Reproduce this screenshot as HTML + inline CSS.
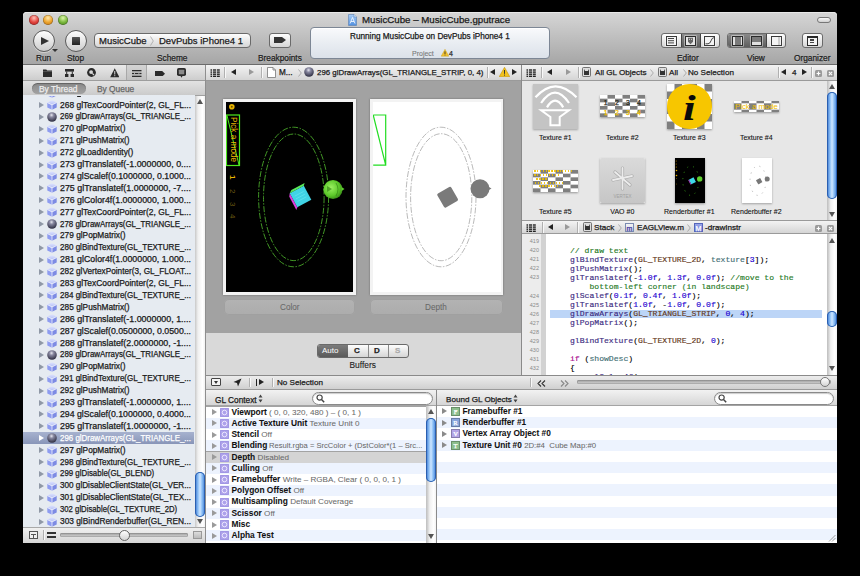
<!DOCTYPE html><html><head><meta charset="utf-8"><style>
*{box-sizing:border-box}
html,body{margin:0;padding:0}
body{width:860px;height:576px;background:#000;position:relative;overflow:hidden;font-family:"Liberation Sans",sans-serif;color:#222}
.a{position:absolute}
.t{position:absolute;white-space:nowrap;line-height:1;-webkit-text-stroke:0.25px currentColor}
.light{position:absolute;width:10px;height:10px;border-radius:50%;box-shadow:inset 0 0 0 0.5px rgba(0,0,0,.35)}
.t b{-webkit-text-stroke:0.05px currentColor}
.lbl{position:absolute;font-size:8.3px;color:#1e1e1e;-webkit-text-stroke:0.25px currentColor;white-space:nowrap;line-height:1;text-shadow:0 1px 0 rgba(255,255,255,.35)}
.btn{position:absolute;background:linear-gradient(#fdfdfd,#d6d6d6);border:1px solid #6a6a6a;border-radius:3px}
.jb{position:absolute;background:linear-gradient(#f3f3f3,#d5d5d5);border-bottom:1px solid #9a9a9a}
.sep{position:absolute;width:1px;background:#b5b5b5}
.row{position:absolute;height:12px}
.nt{position:absolute;font-size:8.2px;color:#111;white-space:nowrap;line-height:1}
.tri{position:absolute;width:0;height:0;border-top:3px solid transparent;border-bottom:3px solid transparent;border-left:5px solid #8e8e8e}
.code{position:absolute;font-family:"Liberation Mono",monospace;font-size:8.1px;-webkit-text-stroke:0.15px currentColor;white-space:pre;line-height:1;color:#000}
.ln{position:absolute;font-size:5.5px;color:#8a8a8a;text-align:right;width:20px;line-height:1}
</style></head><body>
<div class="a" style="left:23px;top:12px;width:814px;height:531px;background:#a3a3a3;border-radius:4px 4px 0 0;overflow:hidden"></div>
<div class="a" style="left:23px;top:12px;width:814px;height:53px;background:linear-gradient(#d6d6d6,#a6a6a6);border-radius:4px 4px 0 0;border-bottom:1px solid #6b6b6b;box-shadow:inset 0 1px 0 #e8e8e8"></div>
<div class="light" style="left:29px;top:15px;background:radial-gradient(circle at 50% 30%,#ffc0b8 0,#e2463f 50%,#a01418 100%)"></div>
<div class="light" style="left:43px;top:15px;background:radial-gradient(circle at 50% 30%,#ffe9ae 0,#eda52e 50%,#b1650d 100%)"></div>
<div class="light" style="left:58px;top:15px;background:radial-gradient(circle at 50% 30%,#dcf5a8 0,#7cb93f 50%,#3b7613 100%)"></div>
<div class="a" style="left:817px;top:17px;width:14px;height:6px;border-radius:3px;border:1px solid #777;background:linear-gradient(#fafafa,#cfcfcf)"></div>
<svg class="a" style="left:348px;top:14px" width="9" height="12" viewBox="0 0 9 12"><defs><linearGradient id="dg" x1="0" y1="0" x2="0" y2="1"><stop offset="0" stop-color="#a9cdf5"/><stop offset="1" stop-color="#4f8fe0"/></linearGradient></defs><path d="M0.5 0.5h5.5l2.5 2.5v8.5h-8z" fill="url(#dg)" stroke="#5a7fb0" stroke-width="0.6"/><path d="M6 0.5v2.5h2.5" fill="#dbe9fa" stroke="#5a7fb0" stroke-width="0.5"/><path d="M2 9.5L4.5 3.5 7 9.5M3 7.5h3" fill="none" stroke="#fff" stroke-width="0.8"/></svg>
<div class="t" style="left:362px;top:15px;font-size:9.7px;color:#1a1a1a">MusicCube &ndash; MusicCube.gputrace</div>
<div class="a" style="left:33px;top:30px;width:22px;height:22px;border-radius:50%;border:1px solid #5a5a5a;background:linear-gradient(#fefefe,#cdcdcd);box-shadow:0 1px 0 rgba(255,255,255,.4)"></div>
<div class="a" style="left:41px;top:36.5px;width:0;height:0;border-top:4px solid transparent;border-bottom:4px solid transparent;border-left:8px solid #333"></div>
<div class="a" style="left:52px;top:49px;width:0;height:0;border-left:3px solid transparent;border-right:3px solid transparent;border-top:3px solid #333"></div>
<div class="a" style="left:65px;top:30px;width:22px;height:22px;border-radius:50%;border:1px solid #5a5a5a;background:linear-gradient(#fefefe,#cdcdcd)"></div>
<div class="a" style="left:72px;top:36.5px;width:8px;height:8px;background:linear-gradient(#555,#222);border-radius:0.5px"></div>
<div class="lbl" style="left:36px;top:54px">Run</div>
<div class="lbl" style="left:67px;top:54px">Stop</div>
<div class="btn" style="left:94px;top:33px;width:157px;height:15px;border-radius:4px"></div>
<div class="t" style="left:99px;top:36px;font-size:9.5px;color:#1a1a1a">MusicCube</div>
<svg class="a" style="left:149.5px;top:36px" width="4" height="10" viewBox="0 0 4 10"><path d="M0.5 0.5L3.3 5 0.5 9.5" fill="none" stroke="#a5a5a5" stroke-width="0.8"/></svg>
<div class="t" style="left:159px;top:36px;font-size:9.5px;color:#1a1a1a">DevPubs iPhone4 1</div>
<div class="lbl" style="left:157px;top:54px">Scheme</div>
<div class="btn" style="left:269px;top:33px;width:22px;height:15px"></div>
<div class="a" style="left:274px;top:37px;width:8px;height:6px;background:#333"></div>
<div class="a" style="left:282px;top:37px;width:0;height:0;border-top:3px solid transparent;border-bottom:3px solid transparent;border-left:4px solid #333"></div>
<div class="lbl" style="left:258px;top:54px">Breakpoints</div>
<div class="a" style="left:310px;top:27px;width:240px;height:32px;border-radius:4px;border:1px solid #7d8795;background:linear-gradient(#f9fafc,#e9edf2 50%,#dce2ea);box-shadow:inset 0 1px 0 #fff"></div>
<div class="t" style="left:350px;top:32.5px;font-size:8.2px;color:#1a1a1a">Running MusicCube on DevPubs iPhone4 1</div>
<div class="t" style="left:412px;top:50px;font-size:7px;color:#7a7a7a;-webkit-text-stroke:0.1px currentColor">Project</div>
<svg class="a" style="left:441px;top:49px" width="8" height="7.5" viewBox="0 0 8 7.5"><path d="M4 0.3L7.8 7.2H0.2z" fill="#f2c230" stroke="#c49a10" stroke-width="0.4"/><rect x="3.6" y="2.4" width="0.8" height="2.6" fill="#222"/><rect x="3.6" y="5.6" width="0.8" height="0.8" fill="#222"/></svg>
<div class="t" style="left:449px;top:50px;font-size:7px;color:#333">4</div>
<div class="btn" style="left:661px;top:33px;width:59px;height:15px;border-radius:3px;overflow:hidden"><div class="a" style="left:19px;top:0;width:20px;height:13px;background:linear-gradient(#8a8a8a,#5e5e5e);border-left:1px solid #444;border-right:1px solid #444"></div></div>
<div class="btn" style="left:727px;top:33px;width:59px;height:15px;border-radius:3px;overflow:hidden"><div class="a" style="left:0;top:0;width:39px;height:13px;background:linear-gradient(#8a8a8a,#5e5e5e);border-right:1px solid #444"></div></div>
<div class="btn" style="left:802px;top:33px;width:21px;height:15px"></div>
<div class="lbl" style="left:677px;top:54px">Editor</div>
<div class="lbl" style="left:747px;top:54px">View</div>
<div class="lbl" style="left:794px;top:54px">Organizer</div>
<div class="a" style="left:23px;top:65px;width:182px;height:16px;background:linear-gradient(#e9e9e9,#cdcdcd);border-bottom:1px solid #9d9d9d"></div>
<div class="a" style="left:126px;top:65px;width:21px;height:15px;background:linear-gradient(#d3d3d3,#c0c0c0);border-left:1px solid #a8a8a8;border-right:1px solid #a8a8a8"></div>
<div class="a" style="left:23px;top:81px;width:182px;height:15px;background:linear-gradient(#e2e2e2,#cbcbcb);border-bottom:1px solid #a0a0a0"></div>
<div class="a" style="left:32px;top:83px;width:54px;height:11px;border-radius:6px;background:linear-gradient(#8a8a8a,#a2a2a2);box-shadow:inset 0 1px 1px rgba(0,0,0,.3)"></div>
<div class="t" style="left:39px;top:85px;font-size:8.4px;color:#eee">By Thread</div>
<div class="t" style="left:97px;top:85px;font-size:8.4px;color:#666">By Queue</div>
<div class="a" style="left:23px;top:95px;width:172px;height:432px;background:#e6ebf1"></div>
<div class="a" style="left:195px;top:96px;width:10px;height:431px;background:linear-gradient(90deg,#c8c8c8,#f0f0f0 30%,#fff 75%,#f2f2f2)"></div>
<div class="a" style="left:23px;top:527px;width:182px;height:16px;background:linear-gradient(#f0f0f0,#d6d6d6);border-top:1px solid #a9a9a9"></div>
<div class="a" style="left:205px;top:65px;width:1px;height:478px;background:#8e8e8e"></div>
<div class="jb" style="left:206px;top:65px;width:315px;height:16px"></div>
<div class="a" style="left:206px;top:81px;width:315px;height:252px;background:#a2a2a2"></div>
<div class="a" style="left:206px;top:333px;width:315px;height:43px;background:#d9d9d9"></div>
<div class="a" style="left:223px;top:99px;width:133px;height:196px;background:#f3f3f3;box-shadow:0 0 2px rgba(0,0,0,.35)"></div>
<div class="a" style="left:226px;top:102px;width:127px;height:190px;background:#000"></div>
<div class="a" style="left:370px;top:99px;width:133px;height:196px;background:#f3f3f3;box-shadow:0 0 2px rgba(0,0,0,.35)"></div>
<div class="a" style="left:373px;top:102px;width:128px;height:190px;background:#fff"></div>
<div class="a" style="left:224px;top:299px;width:131px;height:16px;border-radius:5px;background:linear-gradient(#b3b3b3,#acacac);box-shadow:inset 0 0 0 1px #a0a0a0"></div>
<div class="a" style="left:370px;top:299px;width:133px;height:16px;border-radius:5px;background:linear-gradient(#b3b3b3,#acacac);box-shadow:inset 0 0 0 1px #a0a0a0"></div>
<div class="t" style="left:280px;top:303.5px;font-size:8.2px;color:#686868;-webkit-text-stroke:0.05px currentColor">Color</div>
<div class="t" style="left:425px;top:303.5px;font-size:8.2px;color:#686868;-webkit-text-stroke:0.05px currentColor">Depth</div>
<div class="btn" style="left:317px;top:344px;width:92px;height:14px;border-radius:3px;overflow:hidden"><div class="a" style="left:0;top:0;width:30px;height:12px;background:linear-gradient(#7c7c7c,#5a5a5a)"></div><div class="a" style="left:50px;top:0;width:1px;height:12px;background:#8a8a8a"></div><div class="a" style="left:70px;top:0;width:1px;height:12px;background:#8a8a8a"></div></div>
<div class="t" style="left:322px;top:347px;font-size:8px;color:#fff;-webkit-text-stroke:0">Auto</div>
<div class="t" style="left:354px;top:347px;font-size:8px;font-weight:bold;color:#222">C</div>
<div class="t" style="left:374px;top:347px;font-size:8px;font-weight:bold;color:#222">D</div>
<div class="t" style="left:395px;top:347px;font-size:8px;font-weight:bold;color:#aaa">S</div>
<div class="t" style="left:349.5px;top:361px;font-size:8.4px;color:#222;-webkit-text-stroke:0.1px #222">Buffers</div>
<div class="a" style="left:521px;top:65px;width:1px;height:310px;background:#8a8a8a"></div>
<div class="jb" style="left:522px;top:65px;width:315px;height:16px"></div>
<div class="a" style="left:522px;top:81px;width:315px;height:139px;background:#e7e7e7"></div>
<div class="jb" style="left:522px;top:220px;width:315px;height:14px;border-top:1px solid #9a9a9a"></div>
<div class="a" style="left:522px;top:234px;width:315px;height:141px;background:#fff"></div>
<div class="a" style="left:522px;top:234px;width:19px;height:141px;background:#ececec"></div>
<div class="a" style="left:541px;top:234px;width:5px;height:141px;background:#d2d2d2"></div>
<div class="a" style="left:206px;top:375px;width:631px;height:15px;background:linear-gradient(#ececec,#d0d0d0);border-top:1px solid #8a8a8a;border-bottom:1px solid #9a9a9a"></div>
<div class="a" style="left:206px;top:390px;width:230px;height:16px;background:linear-gradient(#f2f2f2,#d6d6d6);border-bottom:1px solid #a4a4a4"></div>
<div class="a" style="left:437px;top:390px;width:400px;height:16px;background:linear-gradient(#f2f2f2,#d6d6d6);border-bottom:1px solid #a4a4a4"></div>
<div class="a" style="left:436px;top:390px;width:1px;height:153px;background:#8a8a8a"></div>
<div class="a" style="left:206px;top:406.60px;width:220px;height:11.2px;background:#ffffff"></div>
<div class="a" style="left:206px;top:417.83px;width:220px;height:11.2px;background:#edf3fe"></div>
<div class="a" style="left:206px;top:429.06px;width:220px;height:11.2px;background:#ffffff"></div>
<div class="a" style="left:206px;top:440.29px;width:220px;height:11.2px;background:#edf3fe"></div>
<div class="a" style="left:206px;top:451.52px;width:220px;height:11.2px;background:#d4d4d4"></div>
<div class="a" style="left:206px;top:462.75px;width:220px;height:11.2px;background:#edf3fe"></div>
<div class="a" style="left:206px;top:473.98px;width:220px;height:11.2px;background:#ffffff"></div>
<div class="a" style="left:206px;top:485.21px;width:220px;height:11.2px;background:#edf3fe"></div>
<div class="a" style="left:206px;top:496.44px;width:220px;height:11.2px;background:#ffffff"></div>
<div class="a" style="left:206px;top:507.67px;width:220px;height:11.2px;background:#edf3fe"></div>
<div class="a" style="left:206px;top:518.90px;width:220px;height:11.2px;background:#ffffff"></div>
<div class="a" style="left:206px;top:530.13px;width:220px;height:11.2px;background:#edf3fe"></div>
<div class="a" style="left:206px;top:541.36px;width:220px;height:11.2px;background:#ffffff"></div>
<div class="a" style="left:437px;top:406.00px;width:400px;height:11.2px;background:#ffffff"></div>
<div class="a" style="left:437px;top:417.20px;width:400px;height:11.2px;background:#edf3fe"></div>
<div class="a" style="left:437px;top:428.40px;width:400px;height:11.2px;background:#ffffff"></div>
<div class="a" style="left:437px;top:439.60px;width:400px;height:11.2px;background:#edf3fe"></div>
<div class="a" style="left:437px;top:450.80px;width:400px;height:11.2px;background:#ffffff"></div>
<div class="a" style="left:437px;top:462.00px;width:400px;height:11.2px;background:#edf3fe"></div>
<div class="a" style="left:437px;top:473.20px;width:400px;height:11.2px;background:#ffffff"></div>
<div class="a" style="left:437px;top:484.40px;width:400px;height:11.2px;background:#edf3fe"></div>
<div class="a" style="left:437px;top:495.60px;width:400px;height:11.2px;background:#ffffff"></div>
<div class="a" style="left:437px;top:506.80px;width:400px;height:11.2px;background:#edf3fe"></div>
<div class="a" style="left:437px;top:518.00px;width:400px;height:11.2px;background:#ffffff"></div>
<div class="a" style="left:437px;top:529.20px;width:400px;height:11.2px;background:#edf3fe"></div>
<div class="a" style="left:437px;top:540.40px;width:400px;height:11.2px;background:#ffffff"></div>
<svg width="0" height="0" style="position:absolute"><defs>
<linearGradient id="gTop" x1="0" y1="0" x2="0" y2="1"><stop offset="0" stop-color="#dfe4ff"/><stop offset="1" stop-color="#b4bff5"/></linearGradient>
<radialGradient id="gBall" cx="0.45" cy="0.3" r="0.75"><stop offset="0" stop-color="#e8e8f0"/><stop offset="0.3" stop-color="#8888a0"/><stop offset="1" stop-color="#232336"/></radialGradient>
<symbol id="cube" viewBox="0 0 10 10"><polygon points="5,0.3 9.7,2.6 5,4.9 0.3,2.6" fill="url(#gTop)"/><polygon points="0.3,2.6 5,4.9 5,9.8 0.3,7.5" fill="#8e9cf0"/><polygon points="5,4.9 9.7,2.6 9.7,7.5 5,9.8" fill="#7d8be4"/><polyline points="0.3,2.6 5,4.9 9.7,2.6" fill="none" stroke="#fff" stroke-width="0.7"/><line x1="5" y1="4.9" x2="5" y2="9.8" stroke="#fff" stroke-width="0.7"/></symbol>
<symbol id="ball" viewBox="0 0 10 10"><circle cx="5" cy="5" r="4.8" fill="url(#gBall)"/></symbol>
</defs></svg>
<div class="a" style="left:23px;top:96px;width:172px;height:431px;overflow:hidden">
<svg class="a" style="left:24px;top:-7.9px" width="10" height="10"><use href="#cube"/></svg>
<div class="a" style="left:54px;top:0;width:4px;height:1.2px;background:#222;border-radius:1px"></div>
<div class="a" style="left:16px;top:6.0px;width:0;height:0;border-top:3px solid transparent;border-bottom:3px solid transparent;border-left:5px solid #8f98a6"></div>
<svg class="a" style="left:24px;top:4.0px" width="10" height="10"><use href="#cube"/></svg>
<div class="t" style="left:37px;top:4.5px;font-size:8.3px;color:#1a1a1a;transform-origin:0 0;transform:scaleX(1.018)">268 glTexCoordPointer(2, GL_FL...</div>
<div class="a" style="left:16px;top:17.9px;width:0;height:0;border-top:3px solid transparent;border-bottom:3px solid transparent;border-left:5px solid #8f98a6"></div>
<svg class="a" style="left:24px;top:15.9px" width="10" height="10"><use href="#ball"/></svg>
<div class="t" style="left:37px;top:16.4px;font-size:8.3px;color:#1a1a1a;transform-origin:0 0;transform:scaleX(0.953)">269 glDrawArrays(GL_TRIANGLE_...</div>
<div class="a" style="left:16px;top:29.8px;width:0;height:0;border-top:3px solid transparent;border-bottom:3px solid transparent;border-left:5px solid #8f98a6"></div>
<svg class="a" style="left:24px;top:27.8px" width="10" height="10"><use href="#cube"/></svg>
<div class="t" style="left:37px;top:28.3px;font-size:8.3px;color:#1a1a1a">270 glPopMatrix()</div>
<div class="a" style="left:16px;top:41.7px;width:0;height:0;border-top:3px solid transparent;border-bottom:3px solid transparent;border-left:5px solid #8f98a6"></div>
<svg class="a" style="left:24px;top:39.7px" width="10" height="10"><use href="#cube"/></svg>
<div class="t" style="left:37px;top:40.2px;font-size:8.3px;color:#1a1a1a">271 glPushMatrix()</div>
<div class="a" style="left:16px;top:53.6px;width:0;height:0;border-top:3px solid transparent;border-bottom:3px solid transparent;border-left:5px solid #8f98a6"></div>
<svg class="a" style="left:24px;top:51.6px" width="10" height="10"><use href="#cube"/></svg>
<div class="t" style="left:37px;top:52.1px;font-size:8.3px;color:#1a1a1a">272 glLoadIdentity()</div>
<div class="a" style="left:16px;top:65.5px;width:0;height:0;border-top:3px solid transparent;border-bottom:3px solid transparent;border-left:5px solid #8f98a6"></div>
<svg class="a" style="left:24px;top:63.5px" width="10" height="10"><use href="#cube"/></svg>
<div class="t" style="left:37px;top:64.0px;font-size:8.3px;color:#1a1a1a;transform-origin:0 0;transform:scaleX(1.070)">273 glTranslatef(-1.0000000, 0....</div>
<div class="a" style="left:16px;top:77.4px;width:0;height:0;border-top:3px solid transparent;border-bottom:3px solid transparent;border-left:5px solid #8f98a6"></div>
<svg class="a" style="left:24px;top:75.4px" width="10" height="10"><use href="#cube"/></svg>
<div class="t" style="left:37px;top:75.9px;font-size:8.3px;color:#1a1a1a;transform-origin:0 0;transform:scaleX(1.052)">274 glScalef(0.1000000, 0.1000...</div>
<div class="a" style="left:16px;top:89.3px;width:0;height:0;border-top:3px solid transparent;border-bottom:3px solid transparent;border-left:5px solid #8f98a6"></div>
<svg class="a" style="left:24px;top:87.3px" width="10" height="10"><use href="#cube"/></svg>
<div class="t" style="left:37px;top:87.8px;font-size:8.3px;color:#1a1a1a;transform-origin:0 0;transform:scaleX(1.070)">275 glTranslatef(1.0000000, -7....</div>
<div class="a" style="left:16px;top:101.2px;width:0;height:0;border-top:3px solid transparent;border-bottom:3px solid transparent;border-left:5px solid #8f98a6"></div>
<svg class="a" style="left:24px;top:99.2px" width="10" height="10"><use href="#cube"/></svg>
<div class="t" style="left:37px;top:99.7px;font-size:8.3px;color:#1a1a1a;transform-origin:0 0;transform:scaleX(1.060)">276 glColor4f(1.0000000, 1.000...</div>
<div class="a" style="left:16px;top:113.1px;width:0;height:0;border-top:3px solid transparent;border-bottom:3px solid transparent;border-left:5px solid #8f98a6"></div>
<svg class="a" style="left:24px;top:111.1px" width="10" height="10"><use href="#cube"/></svg>
<div class="t" style="left:37px;top:111.6px;font-size:8.3px;color:#1a1a1a;transform-origin:0 0;transform:scaleX(1.018)">277 glTexCoordPointer(2, GL_FL...</div>
<div class="a" style="left:16px;top:125.0px;width:0;height:0;border-top:3px solid transparent;border-bottom:3px solid transparent;border-left:5px solid #8f98a6"></div>
<svg class="a" style="left:24px;top:123.0px" width="10" height="10"><use href="#ball"/></svg>
<div class="t" style="left:37px;top:123.5px;font-size:8.3px;color:#1a1a1a;transform-origin:0 0;transform:scaleX(0.953)">278 glDrawArrays(GL_TRIANGLE_...</div>
<div class="a" style="left:16px;top:136.9px;width:0;height:0;border-top:3px solid transparent;border-bottom:3px solid transparent;border-left:5px solid #8f98a6"></div>
<svg class="a" style="left:24px;top:134.9px" width="10" height="10"><use href="#cube"/></svg>
<div class="t" style="left:37px;top:135.4px;font-size:8.3px;color:#1a1a1a">279 glPopMatrix()</div>
<div class="a" style="left:16px;top:148.8px;width:0;height:0;border-top:3px solid transparent;border-bottom:3px solid transparent;border-left:5px solid #8f98a6"></div>
<svg class="a" style="left:24px;top:146.8px" width="10" height="10"><use href="#cube"/></svg>
<div class="t" style="left:37px;top:147.3px;font-size:8.3px;color:#1a1a1a;transform-origin:0 0;transform:scaleX(0.969)">280 glBindTexture(GL_TEXTURE_...</div>
<div class="a" style="left:16px;top:160.7px;width:0;height:0;border-top:3px solid transparent;border-bottom:3px solid transparent;border-left:5px solid #8f98a6"></div>
<svg class="a" style="left:24px;top:158.7px" width="10" height="10"><use href="#cube"/></svg>
<div class="t" style="left:37px;top:159.2px;font-size:8.3px;color:#1a1a1a;transform-origin:0 0;transform:scaleX(1.060)">281 glColor4f(1.0000000, 1.000...</div>
<div class="a" style="left:16px;top:172.6px;width:0;height:0;border-top:3px solid transparent;border-bottom:3px solid transparent;border-left:5px solid #8f98a6"></div>
<svg class="a" style="left:24px;top:170.6px" width="10" height="10"><use href="#cube"/></svg>
<div class="t" style="left:37px;top:171.1px;font-size:8.3px;color:#1a1a1a;transform-origin:0 0;transform:scaleX(0.991)">282 glVertexPointer(3, GL_FLOAT...</div>
<div class="a" style="left:16px;top:184.5px;width:0;height:0;border-top:3px solid transparent;border-bottom:3px solid transparent;border-left:5px solid #8f98a6"></div>
<svg class="a" style="left:24px;top:182.5px" width="10" height="10"><use href="#cube"/></svg>
<div class="t" style="left:37px;top:183.0px;font-size:8.3px;color:#1a1a1a;transform-origin:0 0;transform:scaleX(1.018)">283 glTexCoordPointer(2, GL_FL...</div>
<div class="a" style="left:16px;top:196.4px;width:0;height:0;border-top:3px solid transparent;border-bottom:3px solid transparent;border-left:5px solid #8f98a6"></div>
<svg class="a" style="left:24px;top:194.4px" width="10" height="10"><use href="#cube"/></svg>
<div class="t" style="left:37px;top:194.9px;font-size:8.3px;color:#1a1a1a;transform-origin:0 0;transform:scaleX(0.969)">284 glBindTexture(GL_TEXTURE_...</div>
<div class="a" style="left:16px;top:208.3px;width:0;height:0;border-top:3px solid transparent;border-bottom:3px solid transparent;border-left:5px solid #8f98a6"></div>
<svg class="a" style="left:24px;top:206.3px" width="10" height="10"><use href="#cube"/></svg>
<div class="t" style="left:37px;top:206.8px;font-size:8.3px;color:#1a1a1a">285 glPushMatrix()</div>
<div class="a" style="left:16px;top:220.2px;width:0;height:0;border-top:3px solid transparent;border-bottom:3px solid transparent;border-left:5px solid #8f98a6"></div>
<svg class="a" style="left:24px;top:218.2px" width="10" height="10"><use href="#cube"/></svg>
<div class="t" style="left:37px;top:218.7px;font-size:8.3px;color:#1a1a1a;transform-origin:0 0;transform:scaleX(1.070)">286 glTranslatef(-1.0000000, 1....</div>
<div class="a" style="left:16px;top:232.1px;width:0;height:0;border-top:3px solid transparent;border-bottom:3px solid transparent;border-left:5px solid #8f98a6"></div>
<svg class="a" style="left:24px;top:230.1px" width="10" height="10"><use href="#cube"/></svg>
<div class="t" style="left:37px;top:230.6px;font-size:8.3px;color:#1a1a1a;transform-origin:0 0;transform:scaleX(1.052)">287 glScalef(0.0500000, 0.0500...</div>
<div class="a" style="left:16px;top:244.0px;width:0;height:0;border-top:3px solid transparent;border-bottom:3px solid transparent;border-left:5px solid #8f98a6"></div>
<svg class="a" style="left:24px;top:242.0px" width="10" height="10"><use href="#cube"/></svg>
<div class="t" style="left:37px;top:242.5px;font-size:8.3px;color:#1a1a1a;transform-origin:0 0;transform:scaleX(1.070)">288 glTranslatef(2.0000000, -1....</div>
<div class="a" style="left:16px;top:255.9px;width:0;height:0;border-top:3px solid transparent;border-bottom:3px solid transparent;border-left:5px solid #8f98a6"></div>
<svg class="a" style="left:24px;top:253.9px" width="10" height="10"><use href="#ball"/></svg>
<div class="t" style="left:37px;top:254.4px;font-size:8.3px;color:#1a1a1a;transform-origin:0 0;transform:scaleX(0.953)">289 glDrawArrays(GL_TRIANGLE_...</div>
<div class="a" style="left:16px;top:267.8px;width:0;height:0;border-top:3px solid transparent;border-bottom:3px solid transparent;border-left:5px solid #8f98a6"></div>
<svg class="a" style="left:24px;top:265.8px" width="10" height="10"><use href="#cube"/></svg>
<div class="t" style="left:37px;top:266.3px;font-size:8.3px;color:#1a1a1a">290 glPopMatrix()</div>
<div class="a" style="left:16px;top:279.7px;width:0;height:0;border-top:3px solid transparent;border-bottom:3px solid transparent;border-left:5px solid #8f98a6"></div>
<svg class="a" style="left:24px;top:277.7px" width="10" height="10"><use href="#cube"/></svg>
<div class="t" style="left:37px;top:278.2px;font-size:8.3px;color:#1a1a1a;transform-origin:0 0;transform:scaleX(0.969)">291 glBindTexture(GL_TEXTURE_...</div>
<div class="a" style="left:16px;top:291.6px;width:0;height:0;border-top:3px solid transparent;border-bottom:3px solid transparent;border-left:5px solid #8f98a6"></div>
<svg class="a" style="left:24px;top:289.6px" width="10" height="10"><use href="#cube"/></svg>
<div class="t" style="left:37px;top:290.1px;font-size:8.3px;color:#1a1a1a">292 glPushMatrix()</div>
<div class="a" style="left:16px;top:303.5px;width:0;height:0;border-top:3px solid transparent;border-bottom:3px solid transparent;border-left:5px solid #8f98a6"></div>
<svg class="a" style="left:24px;top:301.5px" width="10" height="10"><use href="#cube"/></svg>
<div class="t" style="left:37px;top:302.0px;font-size:8.3px;color:#1a1a1a;transform-origin:0 0;transform:scaleX(1.070)">293 glTranslatef(-1.0000000, 1....</div>
<div class="a" style="left:16px;top:315.4px;width:0;height:0;border-top:3px solid transparent;border-bottom:3px solid transparent;border-left:5px solid #8f98a6"></div>
<svg class="a" style="left:24px;top:313.4px" width="10" height="10"><use href="#cube"/></svg>
<div class="t" style="left:37px;top:313.9px;font-size:8.3px;color:#1a1a1a;transform-origin:0 0;transform:scaleX(1.052)">294 glScalef(0.1000000, 0.4000...</div>
<div class="a" style="left:16px;top:327.3px;width:0;height:0;border-top:3px solid transparent;border-bottom:3px solid transparent;border-left:5px solid #8f98a6"></div>
<svg class="a" style="left:24px;top:325.3px" width="10" height="10"><use href="#cube"/></svg>
<div class="t" style="left:37px;top:325.8px;font-size:8.3px;color:#1a1a1a;transform-origin:0 0;transform:scaleX(1.070)">295 glTranslatef(1.0000000, -1....</div>
<div class="a" style="left:0;top:336.2px;width:171px;height:12px;background:linear-gradient(#a7b2cf,#8895b8)"></div>
<div class="a" style="left:16px;top:339.2px;width:0;height:0;border-top:3px solid transparent;border-bottom:3px solid transparent;border-left:5px solid #fff"></div>
<svg class="a" style="left:24px;top:337.2px" width="10" height="10"><use href="#ball"/></svg>
<div class="t" style="left:37px;top:337.7px;font-size:8.3px;color:#fff;transform-origin:0 0;transform:scaleX(0.953)">296 glDrawArrays(GL_TRIANGLE_...</div>
<div class="a" style="left:16px;top:351.1px;width:0;height:0;border-top:3px solid transparent;border-bottom:3px solid transparent;border-left:5px solid #8f98a6"></div>
<svg class="a" style="left:24px;top:349.1px" width="10" height="10"><use href="#cube"/></svg>
<div class="t" style="left:37px;top:349.6px;font-size:8.3px;color:#1a1a1a">297 glPopMatrix()</div>
<div class="a" style="left:16px;top:363.0px;width:0;height:0;border-top:3px solid transparent;border-bottom:3px solid transparent;border-left:5px solid #8f98a6"></div>
<svg class="a" style="left:24px;top:361.0px" width="10" height="10"><use href="#cube"/></svg>
<div class="t" style="left:37px;top:361.5px;font-size:8.3px;color:#1a1a1a;transform-origin:0 0;transform:scaleX(0.969)">298 glBindTexture(GL_TEXTURE_...</div>
<div class="a" style="left:16px;top:374.9px;width:0;height:0;border-top:3px solid transparent;border-bottom:3px solid transparent;border-left:5px solid #8f98a6"></div>
<svg class="a" style="left:24px;top:372.9px" width="10" height="10"><use href="#cube"/></svg>
<div class="t" style="left:37px;top:373.4px;font-size:8.3px;color:#1a1a1a;transform-origin:0 0;transform:scaleX(0.950)">299 glDisable(GL_BLEND)</div>
<div class="a" style="left:16px;top:386.8px;width:0;height:0;border-top:3px solid transparent;border-bottom:3px solid transparent;border-left:5px solid #8f98a6"></div>
<svg class="a" style="left:24px;top:384.8px" width="10" height="10"><use href="#cube"/></svg>
<div class="t" style="left:37px;top:385.3px;font-size:8.3px;color:#1a1a1a;transform-origin:0 0;transform:scaleX(0.983)">300 glDisableClientState(GL_VER...</div>
<div class="a" style="left:16px;top:398.7px;width:0;height:0;border-top:3px solid transparent;border-bottom:3px solid transparent;border-left:5px solid #8f98a6"></div>
<svg class="a" style="left:24px;top:396.7px" width="10" height="10"><use href="#cube"/></svg>
<div class="t" style="left:37px;top:397.2px;font-size:8.3px;color:#1a1a1a;transform-origin:0 0;transform:scaleX(0.990)">301 glDisableClientState(GL_TEX...</div>
<div class="a" style="left:16px;top:410.6px;width:0;height:0;border-top:3px solid transparent;border-bottom:3px solid transparent;border-left:5px solid #8f98a6"></div>
<svg class="a" style="left:24px;top:408.6px" width="10" height="10"><use href="#cube"/></svg>
<div class="t" style="left:37px;top:409.1px;font-size:8.3px;color:#1a1a1a;transform-origin:0 0;transform:scaleX(0.934)">302 glDisable(GL_TEXTURE_2D)</div>
<div class="a" style="left:16px;top:422.5px;width:0;height:0;border-top:3px solid transparent;border-bottom:3px solid transparent;border-left:5px solid #8f98a6"></div>
<svg class="a" style="left:24px;top:420.5px" width="10" height="10"><use href="#cube"/></svg>
<div class="t" style="left:37px;top:421.0px;font-size:8.3px;color:#1a1a1a;transform-origin:0 0;transform:scaleX(1.005)">303 glBindRenderbuffer(GL_REN...</div>
</div>
<div class="a" style="left:197px;top:99px;width:0;height:0;border-left:3px solid transparent;border-right:3px solid transparent;border-bottom:5px solid #555"></div>
<div class="a" style="left:195px;top:472px;width:10px;height:45px;border-radius:5px;background:linear-gradient(90deg,#3670cc,#8cc0f6 30%,#cfe6ff 50%,#8cc0f6 70%,#3d7ad4);box-shadow:inset 0 0 0 1px #2a5fb0"></div>
<div class="a" style="left:197px;top:519px;width:0;height:0;border-left:3px solid transparent;border-right:3px solid transparent;border-top:5px solid #555"></div>
<svg class="a" style="left:42.5px;top:68.5px" width="9" height="8" viewBox="0 0 9 8"><path d="M0 0.5h3.3l0.8 1h4.9v6.5h-9z" fill="#2b2b2b"/><rect x="0" y="2.2" width="9" height="0.5" fill="#777"/></svg>
<svg class="a" style="left:65px;top:68.5px" width="9" height="8" viewBox="0 0 9 8"><rect x="0" y="0" width="9" height="2.6" fill="#2b2b2b"/><rect x="0" y="5" width="3.4" height="3" fill="#2b2b2b"/><rect x="5.6" y="5" width="3.4" height="3" fill="#2b2b2b"/><rect x="1.2" y="2.5" width="1" height="2.6" fill="#2b2b2b"/><rect x="6.8" y="2.5" width="1" height="2.6" fill="#2b2b2b"/></svg>
<svg class="a" style="left:87.3px;top:68px" width="9" height="9" viewBox="0 0 9 9"><circle cx="4.5" cy="4.5" r="4.4" fill="#2b2b2b"/><circle cx="4.1" cy="4.1" r="1.9" fill="#d8d8d8"/><line x1="5.3" y1="5.3" x2="7" y2="7" stroke="#d8d8d8" stroke-width="1.2"/></svg>
<svg class="a" style="left:109.7px;top:68px" width="9.5" height="9.5" viewBox="0 0 9.5 9.5"><path d="M4.75 0.3L9.3 9.2H0.2z" fill="#2b2b2b"/><rect x="4.25" y="3" width="1" height="3.5" fill="#d8d8d8"/><rect x="4.25" y="7.2" width="1" height="1" fill="#d8d8d8"/></svg>
<svg class="a" style="left:132px;top:69.5px" width="9.5" height="7" viewBox="0 0 9.5 7"><rect x="0" y="0" width="9.5" height="1.3" fill="#2b2b2b"/><rect x="0" y="2.85" width="9.5" height="1.3" fill="#2b2b2b"/><rect x="0" y="5.7" width="9.5" height="1.3" fill="#2b2b2b"/><rect x="2" y="2.85" width="0.8" height="1.3" fill="#ccc"/><rect x="6.5" y="2.85" width="0.8" height="1.3" fill="#ccc"/></svg>
<svg class="a" style="left:154.5px;top:70.5px" width="10" height="5.5" viewBox="0 0 10 5.5"><path d="M0 0h7.2l2.8 2.75-2.8 2.75h-7.2z" fill="#2b2b2b"/></svg>
<svg class="a" style="left:176.9px;top:68px" width="9" height="10" viewBox="0 0 9 10"><rect x="0" y="0" width="9" height="8" rx="1.8" fill="#2b2b2b"/><path d="M3.5 7.9l1 1.8 1-1.8z" fill="#2b2b2b"/><rect x="1.8" y="1.8" width="5.4" height="4.4" rx="0.5" fill="#8a8a8a"/></svg>
<svg class="a" style="left:210px;top:69px" width="10" height="8" viewBox="0 0 10 8"><rect x="0.5" y="0.3" width="1.6" height="1.4" fill="#222"/><rect x="3" y="0.3" width="3" height="1.4" fill="#222"/><rect x="6.8" y="0.3" width="3" height="1.4" fill="#222"/><rect x="0.5" y="2.4" width="1.6" height="1.4" fill="#222"/><rect x="3" y="2.4" width="3" height="1.4" fill="#222"/><rect x="6.8" y="2.4" width="3" height="1.4" fill="#222"/><rect x="0.5" y="4.5" width="1.6" height="1.4" fill="#222"/><rect x="3" y="4.5" width="3" height="1.4" fill="#222"/><rect x="6.8" y="4.5" width="3" height="1.4" fill="#222"/><rect x="0.5" y="6.6" width="1.6" height="1.4" fill="#222"/><rect x="3" y="6.6" width="3" height="1.4" fill="#222"/><rect x="6.8" y="6.6" width="3" height="1.4" fill="#222"/></svg>
<div class="a" style="left:224px;top:67px;width:1px;height:11px;background:#b0b0b0;box-shadow:1px 0 0 #f8f8f8"></div>
<div class="a" style="left:231px;top:69px;width:0;height:0;border-top:3.5px solid transparent;border-bottom:3.5px solid transparent;border-right:5px solid #222"></div>
<div class="a" style="left:249px;top:69px;width:0;height:0;border-top:3.5px solid transparent;border-bottom:3.5px solid transparent;border-left:5px solid #999"></div>
<div class="a" style="left:261px;top:67px;width:1px;height:11px;background:#b0b0b0;box-shadow:1px 0 0 #f8f8f8"></div>
<svg class="a" style="left:267px;top:67px" width="9" height="11" viewBox="0 0 9 11"><path d="M0.5 0.5h5.5l2.5 2.5v7.5h-8z" fill="#fff" stroke="#777" stroke-width="0.8"/><path d="M6 0.5v2.5h2.5" fill="none" stroke="#777" stroke-width="0.8"/></svg>
<div class="t" style="left:279px;top:69px;font-size:8.2px;color:#1a1a1a">M...</div>
<svg class="a" style="left:298px;top:69px" width="4" height="8" viewBox="0 0 4 8"><path d="M0.5 0.5L3.3 4 0.5 7.5" fill="none" stroke="#9d9d9d" stroke-width="0.8"/></svg>
<svg class="a" style="left:304px;top:67px" width="10" height="10"><use href="#ball"/></svg>
<div class="t" style="left:317px;top:69px;font-size:7.9px;color:#1a1a1a">296 glDrawArrays(GL_TRIANGLE_STRIP, 0, 4)</div>
<div class="a" style="left:487px;top:67px;width:1px;height:11px;background:#b0b0b0;box-shadow:1px 0 0 #f8f8f8"></div>
<div class="a" style="left:490px;top:69px;width:0;height:0;border-top:3.5px solid transparent;border-bottom:3.5px solid transparent;border-right:5px solid #222"></div>
<svg class="a" style="left:499px;top:67px" width="11" height="10" viewBox="0 0 11 10"><path d="M5.5 0.3L10.8 9.7H0.2z" fill="#f2c21c" stroke="#b88a00" stroke-width="0.5"/><rect x="5" y="3" width="1" height="3.8" fill="#333"/><rect x="5" y="7.6" width="1" height="1" fill="#333"/></svg>
<div class="a" style="left:512px;top:69px;width:0;height:0;border-top:3.5px solid transparent;border-bottom:3.5px solid transparent;border-left:5px solid #222"></div>
<svg class="a" style="left:526px;top:69px" width="10" height="8" viewBox="0 0 10 8"><rect x="0.5" y="0.3" width="1.6" height="1.4" fill="#222"/><rect x="3" y="0.3" width="3" height="1.4" fill="#222"/><rect x="6.8" y="0.3" width="3" height="1.4" fill="#222"/><rect x="0.5" y="2.4" width="1.6" height="1.4" fill="#222"/><rect x="3" y="2.4" width="3" height="1.4" fill="#222"/><rect x="6.8" y="2.4" width="3" height="1.4" fill="#222"/><rect x="0.5" y="4.5" width="1.6" height="1.4" fill="#222"/><rect x="3" y="4.5" width="3" height="1.4" fill="#222"/><rect x="6.8" y="4.5" width="3" height="1.4" fill="#222"/><rect x="0.5" y="6.6" width="1.6" height="1.4" fill="#222"/><rect x="3" y="6.6" width="3" height="1.4" fill="#222"/><rect x="6.8" y="6.6" width="3" height="1.4" fill="#222"/></svg>
<div class="a" style="left:541px;top:67px;width:1px;height:11px;background:#b0b0b0;box-shadow:1px 0 0 #f8f8f8"></div>
<div class="a" style="left:547px;top:69px;width:0;height:0;border-top:3.5px solid transparent;border-bottom:3.5px solid transparent;border-right:5px solid #222"></div>
<div class="a" style="left:566px;top:69px;width:0;height:0;border-top:3.5px solid transparent;border-bottom:3.5px solid transparent;border-left:5px solid #999"></div>
<div class="a" style="left:578px;top:67px;width:1px;height:11px;background:#b0b0b0;box-shadow:1px 0 0 #f8f8f8"></div>
<svg class="a" style="left:582px;top:67px" width="9" height="10" viewBox="0 0 9 10"><rect x="0.5" y="0.5" width="8" height="9" rx="1" fill="#ddd" stroke="#555" stroke-width="0.8"/><path d="M2 2v6h5v-6l-1 2h-3z" fill="#333"/></svg>
<div class="t" style="left:595px;top:69px;font-size:8.1px;color:#1a1a1a">All GL Objects</div>
<svg class="a" style="left:650px;top:69px" width="4" height="8" viewBox="0 0 4 8"><path d="M0.5 0.5L3.3 4 0.5 7.5" fill="none" stroke="#9d9d9d" stroke-width="0.8"/></svg>
<svg class="a" style="left:658px;top:67px" width="9" height="10" viewBox="0 0 9 10"><rect x="0.5" y="0.5" width="8" height="9" rx="1" fill="#ddd" stroke="#555" stroke-width="0.8"/><path d="M2 2v6h5v-6l-1 2h-3z" fill="#333"/></svg>
<div class="t" style="left:669px;top:69px;font-size:8.1px;color:#1a1a1a">All</div>
<svg class="a" style="left:683px;top:69px" width="4" height="8" viewBox="0 0 4 8"><path d="M0.5 0.5L3.3 4 0.5 7.5" fill="none" stroke="#9d9d9d" stroke-width="0.8"/></svg>
<div class="t" style="left:688px;top:69px;font-size:8.1px;color:#1a1a1a">No Selection</div>
<div class="a" style="left:778px;top:67px;width:1px;height:11px;background:#b0b0b0;box-shadow:1px 0 0 #f8f8f8"></div>
<div class="a" style="left:781px;top:69px;width:0;height:0;border-top:3.5px solid transparent;border-bottom:3.5px solid transparent;border-right:5px solid #222"></div>
<div class="t" style="left:792px;top:69px;font-size:8.1px;color:#1a1a1a">4</div>
<div class="a" style="left:802px;top:69px;width:0;height:0;border-top:3.5px solid transparent;border-bottom:3.5px solid transparent;border-left:5px solid #222"></div>
<div class="a" style="left:811px;top:67px;width:1px;height:11px;background:#b0b0b0;box-shadow:1px 0 0 #f8f8f8"></div>
<svg class="a" style="left:815.2px;top:69.7px" width="7" height="7" viewBox="0 0 7 7"><rect width="7" height="7" rx="1.5" fill="#9a9a9a"/><path d="M3.5 1.6v3.8M1.6 3.5h3.8" stroke="#fff" stroke-width="1.2"/></svg>
<svg class="a" style="left:827px;top:69.7px" width="7" height="7" viewBox="0 0 7 7"><rect width="7" height="7" rx="1.5" fill="#9a9a9a"/><path d="M1.9 1.9l3.2 3.2M5.1 1.9l-3.2 3.2" stroke="#fff" stroke-width="1.1"/></svg>
<svg class="a" style="left:526px;top:224px" width="10" height="8" viewBox="0 0 10 8"><rect x="0.5" y="0.3" width="1.6" height="1.4" fill="#222"/><rect x="3" y="0.3" width="3" height="1.4" fill="#222"/><rect x="6.8" y="0.3" width="3" height="1.4" fill="#222"/><rect x="0.5" y="2.4" width="1.6" height="1.4" fill="#222"/><rect x="3" y="2.4" width="3" height="1.4" fill="#222"/><rect x="6.8" y="2.4" width="3" height="1.4" fill="#222"/><rect x="0.5" y="4.5" width="1.6" height="1.4" fill="#222"/><rect x="3" y="4.5" width="3" height="1.4" fill="#222"/><rect x="6.8" y="4.5" width="3" height="1.4" fill="#222"/><rect x="0.5" y="6.6" width="1.6" height="1.4" fill="#222"/><rect x="3" y="6.6" width="3" height="1.4" fill="#222"/><rect x="6.8" y="6.6" width="3" height="1.4" fill="#222"/></svg>
<div class="a" style="left:542px;top:222px;width:1px;height:11px;background:#b0b0b0;box-shadow:1px 0 0 #f8f8f8"></div>
<div class="a" style="left:548px;top:224px;width:0;height:0;border-top:3.5px solid transparent;border-bottom:3.5px solid transparent;border-right:5px solid #222"></div>
<div class="a" style="left:565px;top:224px;width:0;height:0;border-top:3.5px solid transparent;border-bottom:3.5px solid transparent;border-left:5px solid #999"></div>
<div class="a" style="left:577px;top:222px;width:1px;height:11px;background:#b0b0b0;box-shadow:1px 0 0 #f8f8f8"></div>
<svg class="a" style="left:583px;top:222px" width="9" height="10" viewBox="0 0 9 10"><rect x="0.5" y="0.5" width="8" height="9" rx="1" fill="#ddd" stroke="#555" stroke-width="0.8"/><path d="M2 2v6h5v-6l-1 2h-3z" fill="#333"/></svg>
<div class="t" style="left:594px;top:224px;font-size:8.1px;color:#1a1a1a">Stack</div>
<svg class="a" style="left:618px;top:224px" width="4" height="8" viewBox="0 0 4 8"><path d="M0.5 0.5L3.3 4 0.5 7.5" fill="none" stroke="#9d9d9d" stroke-width="0.8"/></svg>
<div class="a" style="left:625px;top:223px;width:9px;height:9px;background:linear-gradient(#f4f4f4,#cfd7e8);border:1px solid #7a8bb0"><div class="t" style="left:0.5px;top:0.5px;font-size:7px;color:#4a3aa0">m</div></div>
<div class="t" style="left:637px;top:224px;font-size:8.1px;color:#1a1a1a">EAGLView.m</div>
<svg class="a" style="left:687px;top:224px" width="4" height="8" viewBox="0 0 4 8"><path d="M0.5 0.5L3.3 4 0.5 7.5" fill="none" stroke="#9d9d9d" stroke-width="0.8"/></svg>
<div class="a" style="left:694px;top:223px;width:9px;height:9px;background:linear-gradient(#9aa6e8,#6f7fd8);border:1px solid #5566bb"><div class="t" style="left:0.5px;top:0.5px;font-size:7px;color:#fff">M</div></div>
<div class="t" style="left:705px;top:224px;font-size:8.1px;color:#1a1a1a">-drawInstr</div>
<svg class="a" style="left:815.2px;top:224.5px" width="7" height="7" viewBox="0 0 7 7"><rect width="7" height="7" rx="1.5" fill="#9a9a9a"/><path d="M3.5 1.6v3.8M1.6 3.5h3.8" stroke="#fff" stroke-width="1.2"/></svg>
<svg class="a" style="left:827px;top:224.5px" width="7" height="7" viewBox="0 0 7 7"><rect width="7" height="7" rx="1.5" fill="#9a9a9a"/><path d="M1.9 1.9l3.2 3.2M5.1 1.9l-3.2 3.2" stroke="#fff" stroke-width="1.1"/></svg>
<div class="a" style="left:211px;top:378px;width:10px;height:8px;border:1px solid #444;border-radius:1px;background:#f4f4f4"><div class="a" style="left:2px;top:2px;width:0;height:0;border-left:2.5px solid transparent;border-right:2.5px solid transparent;border-top:3px solid #333"></div></div>
<svg class="a" style="left:233px;top:378px" width="9" height="9" viewBox="0 0 9 9"><path d="M8.5 0.5L0.5 4l3.5 1 1 3.5z" fill="#222"/></svg>
<div class="a" style="left:249px;top:378px;width:1px;height:9px;background:#b0b0b0;box-shadow:1px 0 0 #f8f8f8"></div>
<div class="a" style="left:256px;top:379px;width:1px;height:7px;background:#222"></div>
<div class="a" style="left:259px;top:379px;width:0;height:0;border-top:3.5px solid transparent;border-bottom:3.5px solid transparent;border-left:5px solid #222"></div>
<div class="a" style="left:272px;top:378px;width:1px;height:9px;background:#b0b0b0;box-shadow:1px 0 0 #f8f8f8"></div>
<div class="t" style="left:277px;top:379px;font-size:8.1px;color:#1a1a1a">No Selection</div>
<div class="a" style="left:530px;top:378px;width:1px;height:9px;background:#b0b0b0;box-shadow:1px 0 0 #f8f8f8"></div>
<svg class="a" style="left:537px;top:379.5px" width="9" height="7" viewBox="0 0 9 7"><path d="M4 0.5L1 3.5 4 6.5M8 0.5L5 3.5 8 6.5" fill="none" stroke="#333" stroke-width="1.1"/></svg>
<svg class="a" style="left:560px;top:379.5px" width="9" height="7" viewBox="0 0 9 7"><path d="M1 0.5L4 3.5 1 6.5M5 0.5L8 3.5 5 6.5" fill="none" stroke="#888" stroke-width="1.1"/></svg>
<div class="a" style="left:577px;top:380px;width:254px;height:4px;border-radius:2px;background:linear-gradient(#9a9a9a,#d8d8d8);box-shadow:inset 0 0 0 0.5px #888"></div>
<div class="a" style="left:820px;top:377px;width:10px;height:10px;border-radius:50%;background:linear-gradient(#fff,#d4d4d4);border:1px solid #777"></div>
<svg class="a" style="left:226px;top:102px" width="127" height="188" viewBox="226 102 127 188">
<ellipse cx="293.6" cy="197" rx="35" ry="69.8" fill="none" stroke="#4aa82a" stroke-width="0.9" stroke-dasharray="6 1.5 1.5 1.5"/>
<ellipse cx="293.8" cy="197.3" rx="30.3" ry="63.3" fill="none" stroke="#4aa82a" stroke-width="0.9" stroke-dasharray="6 1.5 1.5 1.5"/>
<g transform="translate(300.5 196.5) rotate(-28)">
<rect x="-8" y="-8" width="16" height="16" fill="#40d4e6"/><path d="M-5 -3h10M-5 0h10M-5 3h10" stroke="#6ae6f2" stroke-width="0.6"/>
<path d="M-8 -8 L-10 -5 L-10 10 L-8 8z" fill="#e040e0"/>
<path d="M-8 -8 L-5 -10 L10 -10 L8 -8z" fill="#5ae85a"/>

</g>
<defs><radialGradient id="sph" cx="0.4" cy="0.4" r="0.7"><stop offset="0" stop-color="#9af060"/><stop offset="0.6" stop-color="#5cc82a"/><stop offset="1" stop-color="#2f7a12"/></radialGradient></defs>
<circle cx="333" cy="189.5" r="9.5" fill="url(#sph)"/>
<path d="M327 186 l5 3 -5 3z" fill="#3a8a1a" opacity=".7"/>
<path d="M336 183 q4 6 0 13" fill="none" stroke="#2f7a12" stroke-width="1" opacity=".6"/>
<path d="M341.5 187 l3 2 -3 2z" fill="#5fd02f"/>
<circle cx="231.8" cy="106.8" r="2.8" fill="#e8b400"/>
<circle cx="231.8" cy="106.8" r="1" fill="#6a5000"/>
<rect x="226.5" y="115" width="13" height="50.5" fill="none" stroke="#4ee81e" stroke-width="1.2"/>
<line x1="227" y1="115.5" x2="239" y2="165" stroke="#4ee81e" stroke-width="1"/>
</svg>
<div class="t" style="left:237px;top:116.5px;font-size:8.2px;color:#e8b400;-webkit-text-stroke:0;transform-origin:0 0;transform:rotate(90deg)">Pick a mode</div>
<div class="t" style="left:236px;top:175px;font-size:8px;font-weight:bold;color:#e8b400;-webkit-text-stroke:0;transform-origin:0 0;transform:rotate(90deg)">1</div>
<div class="t" style="left:236px;top:189px;font-size:8px;color:#6a5810;-webkit-text-stroke:0;transform-origin:0 0;transform:rotate(90deg)">2</div>
<div class="t" style="left:236px;top:202px;font-size:8px;color:#6a5810;-webkit-text-stroke:0;transform-origin:0 0;transform:rotate(90deg)">3</div>
<div class="t" style="left:236px;top:214px;font-size:8px;color:#6a5810;-webkit-text-stroke:0;transform-origin:0 0;transform:rotate(90deg)">4</div>
<svg class="a" style="left:373px;top:102px" width="128" height="188" viewBox="373 102 128 188">
<ellipse cx="441" cy="197" rx="35" ry="69.8" fill="none" stroke="#8a8a8a" stroke-width="0.6" stroke-dasharray="6 1.5 1.5 1.5"/>
<ellipse cx="441.2" cy="197.2" rx="30.6" ry="63.5" fill="none" stroke="#8a8a8a" stroke-width="0.6" stroke-dasharray="6 1.5 1.5 1.5"/>
<g transform="translate(447.6 197.2) rotate(-30)"><rect x="-8" y="-8" width="16" height="16" rx="1.5" fill="#7a7a7a"/></g>
<circle cx="480" cy="188.7" r="9.5" fill="#7a7a7a"/>
<path d="M488 186.5 l3.5 2 -3.5 2z" fill="#7a7a7a"/>
<path d="M373.2 115h12.5v50.2h-12.5 M373.2 115 L385.7 165.2" fill="none" stroke="#22dd22" stroke-width="1.2"/>
</svg>
<svg class="a" style="left:533px;top:84px;box-shadow:0 1px 2px rgba(0,0,0,.3)" width="45" height="45" viewBox="0 0 45 45">
<rect width="45" height="45" fill="#c4c4c4"/>
<path d="M2.5 13.3 Q22.1 -8.7 43.5 13.3" fill="none" stroke="#fff" stroke-width="2.2"/>
<path d="M8.1 19 Q22.1 -1.8 36 19" fill="none" stroke="#fff" stroke-width="2.2"/>
<path d="M14 23.3 Q22.1 10.1 30.2 23.3" fill="none" stroke="#fff" stroke-width="2.2"/>
<path d="M8.1 26.3 H36 L26.7 33 V41.2 H17.4 V33 Z" fill="none" stroke="#fff" stroke-width="2"/>
</svg>
<svg class="a" style="left:600px;top:95px;box-shadow:0 1px 2px rgba(0,0,0,.35)" width="45" height="22" viewBox="0 0 6 6" preserveAspectRatio="none"><rect width="6" height="6" fill="#fff"/><rect x="1" y="0" width="1" height="1" fill="#7f7f7f"/><rect x="3" y="0" width="1" height="1" fill="#7f7f7f"/><rect x="5" y="0" width="1" height="1" fill="#7f7f7f"/><rect x="0" y="1" width="1" height="1" fill="#7f7f7f"/><rect x="2" y="1" width="1" height="1" fill="#7f7f7f"/><rect x="4" y="1" width="1" height="1" fill="#7f7f7f"/><rect x="1" y="2" width="1" height="1" fill="#7f7f7f"/><rect x="3" y="2" width="1" height="1" fill="#7f7f7f"/><rect x="5" y="2" width="1" height="1" fill="#7f7f7f"/><rect x="0" y="3" width="1" height="1" fill="#7f7f7f"/><rect x="2" y="3" width="1" height="1" fill="#7f7f7f"/><rect x="4" y="3" width="1" height="1" fill="#7f7f7f"/><rect x="1" y="4" width="1" height="1" fill="#7f7f7f"/><rect x="3" y="4" width="1" height="1" fill="#7f7f7f"/><rect x="5" y="4" width="1" height="1" fill="#7f7f7f"/><rect x="0" y="5" width="1" height="1" fill="#7f7f7f"/><rect x="2" y="5" width="1" height="1" fill="#7f7f7f"/><rect x="4" y="5" width="1" height="1" fill="#7f7f7f"/></svg>
<div class="t" style="left:603.7px;top:98.5px;font-size:7px;color:#2a2a1a">1</div>
<div class="t" style="left:603.7px;top:108.5px;font-size:7px;color:#f0c000">1</div>
<div class="t" style="left:614.9px;top:98.5px;font-size:7px;color:#2a2a1a">2</div>
<div class="t" style="left:614.9px;top:108.5px;font-size:7px;color:#f0c000">2</div>
<div class="t" style="left:626.1px;top:98.5px;font-size:7px;color:#2a2a1a">3</div>
<div class="t" style="left:626.1px;top:108.5px;font-size:7px;color:#f0c000">3</div>
<div class="t" style="left:637.0px;top:98.5px;font-size:7px;color:#2a2a1a">4</div>
<div class="t" style="left:637.0px;top:108.5px;font-size:7px;color:#f0c000">4</div>
<svg class="a" style="left:667px;top:84px;box-shadow:0 1px 2px rgba(0,0,0,.35)" width="45" height="45" viewBox="0 0 6 6" preserveAspectRatio="none"><rect width="6" height="6" fill="#fff"/><rect x="1" y="0" width="1" height="1" fill="#7f7f7f"/><rect x="3" y="0" width="1" height="1" fill="#7f7f7f"/><rect x="5" y="0" width="1" height="1" fill="#7f7f7f"/><rect x="0" y="1" width="1" height="1" fill="#7f7f7f"/><rect x="2" y="1" width="1" height="1" fill="#7f7f7f"/><rect x="4" y="1" width="1" height="1" fill="#7f7f7f"/><rect x="1" y="2" width="1" height="1" fill="#7f7f7f"/><rect x="3" y="2" width="1" height="1" fill="#7f7f7f"/><rect x="5" y="2" width="1" height="1" fill="#7f7f7f"/><rect x="0" y="3" width="1" height="1" fill="#7f7f7f"/><rect x="2" y="3" width="1" height="1" fill="#7f7f7f"/><rect x="4" y="3" width="1" height="1" fill="#7f7f7f"/><rect x="1" y="4" width="1" height="1" fill="#7f7f7f"/><rect x="3" y="4" width="1" height="1" fill="#7f7f7f"/><rect x="5" y="4" width="1" height="1" fill="#7f7f7f"/><rect x="0" y="5" width="1" height="1" fill="#7f7f7f"/><rect x="2" y="5" width="1" height="1" fill="#7f7f7f"/><rect x="4" y="5" width="1" height="1" fill="#7f7f7f"/></svg>
<div class="a" style="left:667.3px;top:84.3px;width:44.5px;height:44.5px;border-radius:50%;background:#f7c600"></div>
<div class="t" style="left:683px;top:91px;font-size:35px;transform:scaleX(1.3);transform-origin:0 0;font-family:'Liberation Serif',serif;font-style:italic;font-weight:bold;color:#0a0a0a;-webkit-text-stroke:0">i</div>
<svg class="a" style="left:734px;top:101px;box-shadow:0 1px 2px rgba(0,0,0,.35)" width="45" height="11.4" viewBox="0 0 45 11.4"><rect width="45" height="11.4" fill="#fff"/><rect x="0.0" y="2.3" width="7.5" height="6.4" fill="#7f7f7f"/><rect x="7.5" y="0" width="7.5" height="2.3" fill="#7f7f7f"/><rect x="7.5" y="8.7" width="7.5" height="2.7" fill="#7f7f7f"/><rect x="15.0" y="2.3" width="7.5" height="6.4" fill="#7f7f7f"/><rect x="22.5" y="0" width="7.5" height="2.3" fill="#7f7f7f"/><rect x="22.5" y="8.7" width="7.5" height="2.7" fill="#7f7f7f"/><rect x="30.0" y="2.3" width="7.5" height="6.4" fill="#7f7f7f"/><rect x="37.5" y="0" width="7.5" height="2.3" fill="#7f7f7f"/><rect x="37.5" y="8.7" width="7.5" height="2.7" fill="#7f7f7f"/><text x="1" y="8.3" font-size="7.6" fill="#f0c000" font-family="Liberation Sans" textLength="43" lengthAdjust="spacingAndGlyphs">Pick a mode</text></svg>
<svg class="a" style="left:533px;top:169.5px;box-shadow:0 1px 2px rgba(0,0,0,.35)" width="45" height="22" viewBox="0 0 6 6" preserveAspectRatio="none"><rect width="6" height="6" fill="#fff"/><rect x="1" y="0" width="1" height="1" fill="#7f7f7f"/><rect x="3" y="0" width="1" height="1" fill="#7f7f7f"/><rect x="5" y="0" width="1" height="1" fill="#7f7f7f"/><rect x="0" y="1" width="1" height="1" fill="#7f7f7f"/><rect x="2" y="1" width="1" height="1" fill="#7f7f7f"/><rect x="4" y="1" width="1" height="1" fill="#7f7f7f"/><rect x="1" y="2" width="1" height="1" fill="#7f7f7f"/><rect x="3" y="2" width="1" height="1" fill="#7f7f7f"/><rect x="5" y="2" width="1" height="1" fill="#7f7f7f"/><rect x="0" y="3" width="1" height="1" fill="#7f7f7f"/><rect x="2" y="3" width="1" height="1" fill="#7f7f7f"/><rect x="4" y="3" width="1" height="1" fill="#7f7f7f"/><rect x="1" y="4" width="1" height="1" fill="#7f7f7f"/><rect x="3" y="4" width="1" height="1" fill="#7f7f7f"/><rect x="5" y="4" width="1" height="1" fill="#7f7f7f"/><rect x="0" y="5" width="1" height="1" fill="#7f7f7f"/><rect x="2" y="5" width="1" height="1" fill="#7f7f7f"/><rect x="4" y="5" width="1" height="1" fill="#7f7f7f"/></svg>
<div class="a" style="left:534px;top:170px;width:20px;height:2px;background:repeating-linear-gradient(90deg,#f0c000 0 1.5px,transparent 1.5px 3px);opacity:.85"></div>
<div class="a" style="left:548px;top:170px;width:14px;height:2px;background:repeating-linear-gradient(90deg,#f0c000 0 1.5px,transparent 1.5px 3px);opacity:.85"></div>
<div class="a" style="left:562px;top:170px;width:10px;height:2px;background:repeating-linear-gradient(90deg,#f0c000 0 1.5px,transparent 1.5px 3px);opacity:.85"></div>
<div class="a" style="left:534px;top:174px;width:25px;height:2px;background:repeating-linear-gradient(90deg,#f0c000 0 1.5px,transparent 1.5px 3px);opacity:.85"></div>
<div class="a" style="left:536px;top:178px;width:12px;height:2px;background:repeating-linear-gradient(90deg,#f0c000 0 1.5px,transparent 1.5px 3px);opacity:.85"></div>
<div class="a" style="left:535px;top:182px;width:30px;height:2px;background:repeating-linear-gradient(90deg,#f0c000 0 1.5px,transparent 1.5px 3px);opacity:.85"></div>
<div class="a" style="left:539px;top:185px;width:20px;height:2px;background:repeating-linear-gradient(90deg,#f0c000 0 1.5px,transparent 1.5px 3px);opacity:.85"></div>
<svg class="a" style="left:600px;top:158px;box-shadow:0 1px 2px rgba(0,0,0,.3)" width="45" height="45" viewBox="0 0 45 45">
<defs><linearGradient id="vg" x1="0" y1="0" x2="0" y2="1"><stop offset="0" stop-color="#dadada"/><stop offset="1" stop-color="#c6c6c6"/></linearGradient></defs>
<rect width="45" height="45" rx="2" fill="url(#vg)"/>
<g stroke="#a9a9a9" stroke-width="3.2" stroke-linecap="round"><line x1="22.5" y1="10" x2="22.5" y2="31"/><line x1="13" y1="22" x2="32" y2="18"/><line x1="15" y1="14" x2="30" y2="27"/></g>
<g stroke="#ececec" stroke-width="1.8" stroke-linecap="round"><line x1="22.5" y1="10" x2="22.5" y2="31"/><line x1="13" y1="22" x2="32" y2="18"/><line x1="15" y1="14" x2="30" y2="27"/></g>
<text x="22.5" y="40" font-size="4.5" text-anchor="middle" fill="#a0a0a0" font-family="Liberation Sans">VERTEX</text>
</svg>
<svg class="a" style="left:675px;top:158px;box-shadow:0 1px 2px rgba(0,0,0,.35)" width="30" height="45" viewBox="0 0 30 45">
<rect width="30" height="45" fill="#000"/>
<ellipse cx="15.8" cy="22.7" rx="8" ry="14.7" fill="none" stroke="#2e8a12" stroke-width="1" stroke-dasharray="1.1 5.2"/>
<g transform="translate(17.4 22.8) rotate(-28)"><rect x="-2.6" y="-2.6" width="5.2" height="5.2" fill="#3fd8e8"/><rect x="-3.4" y="-2.6" width="0.8" height="5.2" fill="#c040d0"/></g>
<circle cx="24.7" cy="20.9" r="2.7" fill="#5fd02f"/>
<circle cx="1.2" cy="3" r="0.5" fill="#c89000"/><circle cx="1.2" cy="6" r="0.5" fill="#c89000"/><circle cx="1.3" cy="9" r="0.6" fill="#c89000"/><circle cx="1.5" cy="12.5" r="0.8" fill="#e8b000"/><circle cx="1.5" cy="17.5" r="0.8" fill="#e8b000"/><circle cx="1.5" cy="20.5" r="0.5" fill="#6a5000"/><circle cx="1.5" cy="26" r="0.5" fill="#6a5000"/>
</svg>
<svg class="a" style="left:742px;top:158px;box-shadow:0 1px 2px rgba(0,0,0,.3)" width="30" height="45" viewBox="0 0 30 45">
<rect width="30" height="45" fill="#fff"/>
<ellipse cx="16" cy="22.7" rx="8" ry="14.7" fill="none" stroke="#999" stroke-width="0.8" stroke-dasharray="1 5.2"/>
<g transform="translate(17.2 23.2) rotate(-30)"><rect x="-2.4" y="-2.4" width="4.8" height="4.8" rx="0.5" fill="#777"/></g>
<circle cx="25.2" cy="21" r="2.5" fill="#777"/>
</svg>
<div class="t" style="left:515.3px;width:80px;text-align:center;top:133.5px;font-size:7px;color:#111;-webkit-text-stroke:0.1px currentColor">Texture #1</div>
<div class="t" style="left:582.3px;width:80px;text-align:center;top:133.5px;font-size:7px;color:#111;-webkit-text-stroke:0.1px currentColor">Texture #2</div>
<div class="t" style="left:649.3px;width:80px;text-align:center;top:133.5px;font-size:7px;color:#111;-webkit-text-stroke:0.1px currentColor">Texture #3</div>
<div class="t" style="left:716.3px;width:80px;text-align:center;top:133.5px;font-size:7px;color:#111;-webkit-text-stroke:0.1px currentColor">Texture #4</div>
<div class="t" style="left:515.3px;width:80px;text-align:center;top:207.5px;font-size:7px;color:#111;-webkit-text-stroke:0.1px currentColor">Texture #5</div>
<div class="t" style="left:582.3px;width:80px;text-align:center;top:207.5px;font-size:7px;color:#111;-webkit-text-stroke:0.1px currentColor">VAO #0</div>
<div class="t" style="left:649.3px;width:80px;text-align:center;top:207.5px;font-size:7px;color:#111;-webkit-text-stroke:0.1px currentColor">Renderbuffer #1</div>
<div class="t" style="left:716.3px;width:80px;text-align:center;top:207.5px;font-size:7px;color:#111;-webkit-text-stroke:0.1px currentColor">Renderbuffer #2</div>
<div class="a" style="left:827px;top:81px;width:10px;height:139px;background:linear-gradient(90deg,#c8c8c8,#f0f0f0 30%,#fff 75%,#f2f2f2);border-left:1px solid #c4c4c4"></div>
<div class="a" style="left:829px;top:84px;width:0;height:0;border-left:3px solid transparent;border-right:3px solid transparent;border-bottom:5px solid #555"></div>
<div class="a" style="left:827px;top:92px;width:10px;height:107px;border-radius:5px;background:linear-gradient(90deg,#3670cc,#8cc0f6 30%,#cfe6ff 50%,#8cc0f6 70%,#3d7ad4);box-shadow:inset 0 0 0 1px #2a5fb0"></div>
<div class="a" style="left:829px;top:212px;width:0;height:0;border-left:3px solid transparent;border-right:3px solid transparent;border-top:5px solid #555"></div>
<div class="a" style="left:522px;top:234px;width:305px;height:141px;overflow:hidden">
<div class="a" style="left:28px;top:75.9px;width:272px;height:8.5px;background:#bcd5f7"></div>
<div class="ln" style="left:-3px;top:5.20px">419</div>
<div class="code" style="left:48px;top:3.50px;color:#000"></div>
<div class="ln" style="left:-3px;top:14.25px">420</div>
<div class="code" style="left:48px;top:12.55px;color:#000"><span style="color:#1f7a1f">// draw text</span></div>
<div class="ln" style="left:-3px;top:23.30px">421</div>
<div class="code" style="left:48px;top:21.60px;color:#000"><span style="color:#3b2a80">glBindTexture</span>(<span style="color:#643820">GL_TEXTURE_2D</span>, <span style="color:#3f6e74">texture</span>[<span style="color:#1c00cf">3</span>]);</div>
<div class="ln" style="left:-3px;top:32.35px">422</div>
<div class="code" style="left:48px;top:30.65px;color:#000"><span style="color:#3b2a80">glPushMatrix</span>();</div>
<div class="ln" style="left:-3px;top:41.40px">423</div>
<div class="code" style="left:48px;top:39.70px;color:#000"><span style="color:#3b2a80">glTranslatef</span>(-<span style="color:#1c00cf">1.0f</span>, <span style="color:#1c00cf">1.3f</span>, <span style="color:#1c00cf">0.0f</span>); <span style="color:#1f7a1f">//move to the</span></div>
<div class="code" style="left:48px;top:48.75px;color:#000">    <span style="color:#1f7a1f">bottom-left corner (in landscape)</span></div>
<div class="ln" style="left:-3px;top:59.50px">424</div>
<div class="code" style="left:48px;top:57.80px;color:#000"><span style="color:#3b2a80">glScalef</span>(<span style="color:#1c00cf">0.1f</span>, <span style="color:#1c00cf">0.4f</span>, <span style="color:#1c00cf">1.0f</span>);</div>
<div class="ln" style="left:-3px;top:68.55px">425</div>
<div class="code" style="left:48px;top:66.85px;color:#000"><span style="color:#3b2a80">glTranslatef</span>(<span style="color:#1c00cf">1.0f</span>, -<span style="color:#1c00cf">1.0f</span>, <span style="color:#1c00cf">0.0f</span>);</div>
<div class="ln" style="left:-3px;top:77.60px">426</div>
<div class="code" style="left:48px;top:75.90px;color:#000"><span style="color:#3b2a80">glDrawArrays</span>(<span style="color:#643820">GL_TRIANGLE_STRIP</span>, <span style="color:#1c00cf">0</span>, <span style="color:#1c00cf">4</span>);</div>
<div class="ln" style="left:-3px;top:86.65px">427</div>
<div class="code" style="left:48px;top:84.95px;color:#000"><span style="color:#3b2a80">glPopMatrix</span>();</div>
<div class="ln" style="left:-3px;top:95.70px">428</div>
<div class="code" style="left:48px;top:94.00px;color:#000"></div>
<div class="ln" style="left:-3px;top:104.75px">429</div>
<div class="code" style="left:48px;top:103.05px;color:#000"><span style="color:#3b2a80">glBindTexture</span>(<span style="color:#643820">GL_TEXTURE_2D</span>, <span style="color:#1c00cf">0</span>);</div>
<div class="ln" style="left:-3px;top:113.80px">430</div>
<div class="code" style="left:48px;top:112.10px;color:#000"></div>
<div class="ln" style="left:-3px;top:122.85px">431</div>
<div class="code" style="left:48px;top:121.15px;color:#000"><span style="color:#aa0d91">if</span> (<span style="color:#3f6e74">showDesc</span>)</div>
<div class="ln" style="left:-3px;top:131.90px">432</div>
<div class="code" style="left:48px;top:130.20px;color:#000">{</div>
<div class="ln" style="left:-3px;top:140.95px">433</div>
<div class="code" style="left:48px;top:139.25px;color:#000">    <span style="color:#3b2a80">glColor4f</span>(</div>
</div>
<div class="a" style="left:827px;top:234px;width:10px;height:141px;background:linear-gradient(90deg,#c8c8c8,#f0f0f0 30%,#fff 75%,#f2f2f2);border-left:1px solid #c4c4c4"></div>
<div class="a" style="left:829px;top:238px;width:0;height:0;border-left:3px solid transparent;border-right:3px solid transparent;border-bottom:5px solid #555"></div>
<div class="a" style="left:827px;top:311px;width:10px;height:16px;border-radius:5px;background:linear-gradient(90deg,#3670cc,#8cc0f6 30%,#cfe6ff 50%,#8cc0f6 70%,#3d7ad4);box-shadow:inset 0 0 0 1px #2a5fb0"></div>
<div class="a" style="left:829px;top:366px;width:0;height:0;border-left:3px solid transparent;border-right:3px solid transparent;border-top:5px solid #555"></div>
<div class="t" style="left:215px;top:395.5px;font-size:8.3px;color:#1a1a1a">GL Context</div>
<svg class="a" style="left:258px;top:394px" width="5" height="9" viewBox="0 0 5 9"><path d="M0.5 3.5L2.5 0.5 4.5 3.5z M0.5 5.5L2.5 8.5 4.5 5.5z" fill="#444"/></svg>
<div class="a" style="left:312px;top:392px;width:121px;height:13px;border-radius:7px;background:#fff;border:1px solid #8a8a8a;box-shadow:inset 0 1px 1px rgba(0,0,0,.2)"></div>
<svg class="a" style="left:316px;top:394px" width="9" height="9" viewBox="0 0 9 9"><circle cx="3.6" cy="3.6" r="2.6" fill="none" stroke="#444" stroke-width="1.2"/><line x1="5.5" y1="5.5" x2="8.2" y2="8.2" stroke="#444" stroke-width="1.5"/></svg>
<div class="t" style="left:446px;top:395.5px;font-size:8.1px;color:#1a1a1a">Bound GL Objects</div>
<svg class="a" style="left:513px;top:394px" width="5" height="9" viewBox="0 0 5 9"><path d="M0.5 3.5L2.5 0.5 4.5 3.5z M0.5 5.5L2.5 8.5 4.5 5.5z" fill="#444"/></svg>
<div class="a" style="left:714px;top:392px;width:120px;height:13px;border-radius:7px;background:#fff;border:1px solid #8a8a8a;box-shadow:inset 0 1px 1px rgba(0,0,0,.2)"></div>
<svg class="a" style="left:718px;top:394px" width="9" height="9" viewBox="0 0 9 9"><circle cx="3.6" cy="3.6" r="2.6" fill="none" stroke="#444" stroke-width="1.2"/><line x1="5.5" y1="5.5" x2="8.2" y2="8.2" stroke="#444" stroke-width="1.5"/></svg>
<div class="a" style="left:211.6px;top:409.2px;width:0;height:0;border-top:3px solid transparent;border-bottom:3px solid transparent;border-left:5px solid #9a9a9a"></div>
<svg class="a" style="left:219.5px;top:407.7px" width="9" height="9" viewBox="0 0 9 9"><rect x="0" y="0" width="9" height="9" rx="0.8" fill="#ada2ea"/><rect x="0.3" y="0.3" width="8.4" height="8.4" rx="0.8" fill="none" stroke="#958ade" stroke-width="0.6"/><circle cx="4.5" cy="4.5" r="2.3" fill="none" stroke="#f0ecff" stroke-width="0.9"/></svg>
<div class="t" style="left:231.5px;top:407.6px;font-size:8.4px;color:#111"><b>Viewport</b> <span style="color:#6a6a6a;font-size:8.1px;-webkit-text-stroke:0.05px currentColor">( 0, 0, 320, 480 ) &ndash; ( 0, 1 )</span></div>
<div class="a" style="left:211.6px;top:420.4px;width:0;height:0;border-top:3px solid transparent;border-bottom:3px solid transparent;border-left:5px solid #9a9a9a"></div>
<svg class="a" style="left:219.5px;top:418.9px" width="9" height="9" viewBox="0 0 9 9"><rect x="0" y="0" width="9" height="9" rx="0.8" fill="#ada2ea"/><rect x="0.3" y="0.3" width="8.4" height="8.4" rx="0.8" fill="none" stroke="#958ade" stroke-width="0.6"/><circle cx="4.5" cy="4.5" r="2.3" fill="none" stroke="#f0ecff" stroke-width="0.9"/></svg>
<div class="t" style="left:231.5px;top:418.8px;font-size:8.4px;color:#111"><b>Active Texture Unit</b> <span style="color:#6a6a6a;font-size:8.1px;-webkit-text-stroke:0.05px currentColor">Texture Unit 0</span></div>
<div class="a" style="left:211.6px;top:431.7px;width:0;height:0;border-top:3px solid transparent;border-bottom:3px solid transparent;border-left:5px solid #9a9a9a"></div>
<svg class="a" style="left:219.5px;top:430.2px" width="9" height="9" viewBox="0 0 9 9"><rect x="0" y="0" width="9" height="9" rx="0.8" fill="#ada2ea"/><rect x="0.3" y="0.3" width="8.4" height="8.4" rx="0.8" fill="none" stroke="#958ade" stroke-width="0.6"/><circle cx="4.5" cy="4.5" r="2.3" fill="none" stroke="#f0ecff" stroke-width="0.9"/></svg>
<div class="t" style="left:231.5px;top:430.1px;font-size:8.4px;color:#111"><b>Stencil</b> <span style="color:#6a6a6a;font-size:8.1px;-webkit-text-stroke:0.05px currentColor">Off</span></div>
<div class="a" style="left:211.6px;top:442.9px;width:0;height:0;border-top:3px solid transparent;border-bottom:3px solid transparent;border-left:5px solid #9a9a9a"></div>
<svg class="a" style="left:219.5px;top:441.4px" width="9" height="9" viewBox="0 0 9 9"><rect x="0" y="0" width="9" height="9" rx="0.8" fill="#ada2ea"/><rect x="0.3" y="0.3" width="8.4" height="8.4" rx="0.8" fill="none" stroke="#958ade" stroke-width="0.6"/><circle cx="4.5" cy="4.5" r="2.3" fill="none" stroke="#f0ecff" stroke-width="0.9"/></svg>
<div class="t" style="left:231.5px;top:441.3px;font-size:8.4px;color:#111"><b>Blending</b></div>
<div class="t" style="left:269.3px;top:441.7px;font-size:8.1px;color:#6a6a6a;-webkit-text-stroke:0.05px currentColor;transform-origin:0 0;transform:scaleX(0.937)">Result.rgba = SrcColor + (DstColor*(1 &ndash; Src...</div>
<div class="a" style="left:211.6px;top:454.1px;width:0;height:0;border-top:3px solid transparent;border-bottom:3px solid transparent;border-left:5px solid #9a9a9a"></div>
<svg class="a" style="left:219.5px;top:452.6px" width="9" height="9" viewBox="0 0 9 9"><rect x="0" y="0" width="9" height="9" rx="0.8" fill="#ada2ea"/><rect x="0.3" y="0.3" width="8.4" height="8.4" rx="0.8" fill="none" stroke="#958ade" stroke-width="0.6"/><circle cx="4.5" cy="4.5" r="2.3" fill="none" stroke="#f0ecff" stroke-width="0.9"/></svg>
<div class="t" style="left:231.5px;top:452.5px;font-size:8.4px;color:#111"><b>Depth</b> <span style="color:#6a6a6a;font-size:8.1px;-webkit-text-stroke:0.05px currentColor">Disabled</span></div>
<div class="a" style="left:211.6px;top:465.4px;width:0;height:0;border-top:3px solid transparent;border-bottom:3px solid transparent;border-left:5px solid #9a9a9a"></div>
<svg class="a" style="left:219.5px;top:463.9px" width="9" height="9" viewBox="0 0 9 9"><rect x="0" y="0" width="9" height="9" rx="0.8" fill="#ada2ea"/><rect x="0.3" y="0.3" width="8.4" height="8.4" rx="0.8" fill="none" stroke="#958ade" stroke-width="0.6"/><circle cx="4.5" cy="4.5" r="2.3" fill="none" stroke="#f0ecff" stroke-width="0.9"/></svg>
<div class="t" style="left:231.5px;top:463.8px;font-size:8.4px;color:#111"><b>Culling</b> <span style="color:#6a6a6a;font-size:8.1px;-webkit-text-stroke:0.05px currentColor">Off</span></div>
<div class="a" style="left:211.6px;top:476.6px;width:0;height:0;border-top:3px solid transparent;border-bottom:3px solid transparent;border-left:5px solid #9a9a9a"></div>
<svg class="a" style="left:219.5px;top:475.1px" width="9" height="9" viewBox="0 0 9 9"><rect x="0" y="0" width="9" height="9" rx="0.8" fill="#ada2ea"/><rect x="0.3" y="0.3" width="8.4" height="8.4" rx="0.8" fill="none" stroke="#958ade" stroke-width="0.6"/><circle cx="4.5" cy="4.5" r="2.3" fill="none" stroke="#f0ecff" stroke-width="0.9"/></svg>
<div class="t" style="left:231.5px;top:475.0px;font-size:8.4px;color:#111"><b>Framebuffer</b> <span style="color:#6a6a6a;font-size:8.1px;-webkit-text-stroke:0.05px currentColor">Write &ndash; RGBA, Clear ( 0, 0, 0, 1 )</span></div>
<div class="a" style="left:211.6px;top:487.8px;width:0;height:0;border-top:3px solid transparent;border-bottom:3px solid transparent;border-left:5px solid #9a9a9a"></div>
<svg class="a" style="left:219.5px;top:486.3px" width="9" height="9" viewBox="0 0 9 9"><rect x="0" y="0" width="9" height="9" rx="0.8" fill="#ada2ea"/><rect x="0.3" y="0.3" width="8.4" height="8.4" rx="0.8" fill="none" stroke="#958ade" stroke-width="0.6"/><circle cx="4.5" cy="4.5" r="2.3" fill="none" stroke="#f0ecff" stroke-width="0.9"/></svg>
<div class="t" style="left:231.5px;top:486.2px;font-size:8.4px;color:#111"><b>Polygon Offset</b> <span style="color:#6a6a6a;font-size:8.1px;-webkit-text-stroke:0.05px currentColor">Off</span></div>
<div class="a" style="left:211.6px;top:499.0px;width:0;height:0;border-top:3px solid transparent;border-bottom:3px solid transparent;border-left:5px solid #9a9a9a"></div>
<svg class="a" style="left:219.5px;top:497.5px" width="9" height="9" viewBox="0 0 9 9"><rect x="0" y="0" width="9" height="9" rx="0.8" fill="#ada2ea"/><rect x="0.3" y="0.3" width="8.4" height="8.4" rx="0.8" fill="none" stroke="#958ade" stroke-width="0.6"/><circle cx="4.5" cy="4.5" r="2.3" fill="none" stroke="#f0ecff" stroke-width="0.9"/></svg>
<div class="t" style="left:231.5px;top:497.4px;font-size:8.4px;color:#111"><b>Multisampling</b> <span style="color:#6a6a6a;font-size:8.1px;-webkit-text-stroke:0.05px currentColor">Default Coverage</span></div>
<div class="a" style="left:211.6px;top:510.3px;width:0;height:0;border-top:3px solid transparent;border-bottom:3px solid transparent;border-left:5px solid #9a9a9a"></div>
<svg class="a" style="left:219.5px;top:508.8px" width="9" height="9" viewBox="0 0 9 9"><rect x="0" y="0" width="9" height="9" rx="0.8" fill="#ada2ea"/><rect x="0.3" y="0.3" width="8.4" height="8.4" rx="0.8" fill="none" stroke="#958ade" stroke-width="0.6"/><circle cx="4.5" cy="4.5" r="2.3" fill="none" stroke="#f0ecff" stroke-width="0.9"/></svg>
<div class="t" style="left:231.5px;top:508.7px;font-size:8.4px;color:#111"><b>Scissor</b> <span style="color:#6a6a6a;font-size:8.1px;-webkit-text-stroke:0.05px currentColor">Off</span></div>
<div class="a" style="left:211.6px;top:521.5px;width:0;height:0;border-top:3px solid transparent;border-bottom:3px solid transparent;border-left:5px solid #9a9a9a"></div>
<svg class="a" style="left:219.5px;top:520.0px" width="9" height="9" viewBox="0 0 9 9"><rect x="0" y="0" width="9" height="9" rx="0.8" fill="#ada2ea"/><rect x="0.3" y="0.3" width="8.4" height="8.4" rx="0.8" fill="none" stroke="#958ade" stroke-width="0.6"/><circle cx="4.5" cy="4.5" r="2.3" fill="none" stroke="#f0ecff" stroke-width="0.9"/></svg>
<div class="t" style="left:231.5px;top:519.9px;font-size:8.4px;color:#111"><b>Misc</b> <span style="color:#6a6a6a;font-size:8.1px;-webkit-text-stroke:0.05px currentColor"></span></div>
<div class="a" style="left:211.6px;top:532.7px;width:0;height:0;border-top:3px solid transparent;border-bottom:3px solid transparent;border-left:5px solid #9a9a9a"></div>
<svg class="a" style="left:219.5px;top:531.2px" width="9" height="9" viewBox="0 0 9 9"><rect x="0" y="0" width="9" height="9" rx="0.8" fill="#ada2ea"/><rect x="0.3" y="0.3" width="8.4" height="8.4" rx="0.8" fill="none" stroke="#958ade" stroke-width="0.6"/><circle cx="4.5" cy="4.5" r="2.3" fill="none" stroke="#f0ecff" stroke-width="0.9"/></svg>
<div class="t" style="left:231.5px;top:531.1px;font-size:8.4px;color:#111"><b>Alpha Test</b> <span style="color:#6a6a6a;font-size:8.1px;-webkit-text-stroke:0.05px currentColor"></span></div>
<div class="a" style="left:211.6px;top:544.0px;width:0;height:0;border-top:3px solid transparent;border-bottom:3px solid transparent;border-left:5px solid #9a9a9a"></div>
<svg class="a" style="left:219.5px;top:542.5px" width="9" height="9" viewBox="0 0 9 9"><rect x="0" y="0" width="9" height="9" rx="0.8" fill="#ada2ea"/><rect x="0.3" y="0.3" width="8.4" height="8.4" rx="0.8" fill="none" stroke="#958ade" stroke-width="0.6"/><circle cx="4.5" cy="4.5" r="2.3" fill="none" stroke="#f0ecff" stroke-width="0.9"/></svg>
<div class="a" style="left:426px;top:406px;width:10px;height:137px;background:linear-gradient(90deg,#c8c8c8,#f0f0f0 30%,#fff 75%,#f2f2f2);border-left:1px solid #c4c4c4"></div>
<div class="a" style="left:428px;top:409px;width:0;height:0;border-left:3px solid transparent;border-right:3px solid transparent;border-bottom:5px solid #555"></div>
<div class="a" style="left:426px;top:418px;width:10px;height:64px;border-radius:5px;background:linear-gradient(90deg,#3670cc,#8cc0f6 30%,#cfe6ff 50%,#8cc0f6 70%,#3d7ad4);box-shadow:inset 0 0 0 1px #2a5fb0"></div>
<div class="a" style="left:428px;top:534px;width:0;height:0;border-left:3px solid transparent;border-right:3px solid transparent;border-top:5px solid #555"></div>
<div class="a" style="left:442px;top:408.3px;width:0;height:0;border-top:3px solid transparent;border-bottom:3px solid transparent;border-left:5px solid #8a8a8a"></div>
<div class="a" style="left:450.5px;top:406.8px;width:9px;height:9px;background:#8dbf8d;border:0.6px solid rgba(0,0,0,.25)"><div class="t" style="left:0;width:8px;text-align:center;top:1px;font-size:6.5px;color:#fff;font-family:'Liberation Serif',serif">F</div></div>
<div class="t" style="left:462.5px;top:406.7px;font-size:8.3px;color:#111"><b>Framebuffer #1</b> <span style="color:#6a6a6a;font-size:7.8px;-webkit-text-stroke:0.05px currentColor"></span></div>
<div class="a" style="left:442px;top:419.6px;width:0;height:0;border-top:3px solid transparent;border-bottom:3px solid transparent;border-left:5px solid #8a8a8a"></div>
<div class="a" style="left:450.5px;top:418.1px;width:9px;height:9px;background:#8aa6dc;border:0.6px solid rgba(0,0,0,.25)"><div class="t" style="left:0;width:8px;text-align:center;top:1px;font-size:6.5px;color:#fff;font-family:'Liberation Serif',serif">R</div></div>
<div class="t" style="left:462.5px;top:418.0px;font-size:8.3px;color:#111"><b>Renderbuffer #1</b> <span style="color:#6a6a6a;font-size:7.8px;-webkit-text-stroke:0.05px currentColor"></span></div>
<div class="a" style="left:442px;top:430.9px;width:0;height:0;border-top:3px solid transparent;border-bottom:3px solid transparent;border-left:5px solid #8a8a8a"></div>
<div class="a" style="left:450.5px;top:429.4px;width:9px;height:9px;background:#b3a6e6;border:0.6px solid rgba(0,0,0,.25)"><div class="t" style="left:0;width:8px;text-align:center;top:1px;font-size:6.5px;color:#fff;font-family:'Liberation Serif',serif">V</div></div>
<div class="t" style="left:462.5px;top:429.3px;font-size:8.3px;color:#111"><b>Vertex Array Object #0</b> <span style="color:#6a6a6a;font-size:7.8px;-webkit-text-stroke:0.05px currentColor"></span></div>
<div class="a" style="left:442px;top:442.2px;width:0;height:0;border-top:3px solid transparent;border-bottom:3px solid transparent;border-left:5px solid #8a8a8a"></div>
<div class="a" style="left:450.5px;top:440.7px;width:9px;height:9px;background:#8dbf8d;border:0.6px solid rgba(0,0,0,.25)"><div class="t" style="left:0;width:8px;text-align:center;top:1px;font-size:6.5px;color:#fff;font-family:'Liberation Serif',serif">T</div></div>
<div class="t" style="left:462.5px;top:440.6px;font-size:8.3px;color:#111"><b>Texture Unit #0</b> <span style="color:#6a6a6a;font-size:7.8px;-webkit-text-stroke:0.05px currentColor">2D:#4&nbsp;&nbsp;Cube Map:#0</span></div>
<svg class="a" style="left:826px;top:532px" width="10" height="10" viewBox="0 0 10 10"><path d="M9.5 3L3 9.5M9.5 6L6 9.5" stroke="#888" stroke-width="0.8"/></svg>
<div class="a" style="left:29px;top:531px;width:9px;height:8px;border:1px solid #555;background:#f0f0f0"><div class="a" style="left:1px;top:2px;width:5px;height:1px;background:#555"></div><div class="a" style="left:3px;top:2px;width:1px;height:4px;background:#555"></div></div>
<div class="a" style="left:43px;top:530px;width:1px;height:10px;background:#b0b0b0;box-shadow:1px 0 0 #f8f8f8"></div>
<div class="a" style="left:47px;top:532px;width:9px;height:1.5px;background:#333"></div><div class="a" style="left:47px;top:536px;width:9px;height:1.5px;background:#333"></div>
<div class="a" style="left:60px;top:533px;width:128px;height:4px;border-radius:2px;background:linear-gradient(#9a9a9a,#d8d8d8);box-shadow:inset 0 0 0 0.5px #888"></div>
<div class="a" style="left:119px;top:530px;width:11px;height:11px;border-radius:50%;background:linear-gradient(#fff,#d4d4d4);border:1px solid #666"></div>
<div class="a" style="left:193px;top:531px;width:9px;height:8px;border:1px solid #999;background:linear-gradient(#ddd,#bbb)"></div>
<div class="a" style="left:665.5px;top:36px;width:11px;height:10px;border:1.2px solid #3a3a3a;background:#f4f4f4;box-shadow:0 0 0 0.6px rgba(255,255,255,.7)"><div class="a" style="left:1.3px;top:1.2px;width:6px;height:1.1px;background:#444;box-shadow:0 2.2px 0 #444,0 4.4px 0 #444"></div></div>
<div class="a" style="left:684.5px;top:36px;width:11px;height:10px;border:1.2px solid #2a2a2a;background:#e6e6e6;box-shadow:0 0 0 0.6px rgba(255,255,255,.7)"><svg class="a" style="left:0;top:0" width="9" height="8" viewBox="0 0 9 8"><path d="M2 0.8h5v4l-2.5 2.5-2.5-2.5z" fill="#666"/><rect x="3" y="1.8" width="1" height="1" fill="#ddd"/><rect x="5" y="1.8" width="1" height="1" fill="#ddd"/></svg></div>
<div class="a" style="left:704.1px;top:36px;width:11px;height:10px;border:1.2px solid #3a3a3a;background:#f4f4f4;box-shadow:0 0 0 0.6px rgba(255,255,255,.7)"><svg class="a" style="left:0;top:0" width="9" height="8" viewBox="0 0 9 8"><path d="M0.5 6.8h2.5q2 0 3-3t2.5-3h0.5" fill="none" stroke="#444" stroke-width="1"/></svg></div>
<div class="a" style="left:731.7px;top:36px;width:11px;height:10px;border:1.2px solid #2a2a2a;background:#e0e0e0;box-shadow:0 0 0 0.6px rgba(255,255,255,.7)"><div class="a" style="left:2px;top:0;width:6.5px;height:7.6px;background:#7a7a7a"></div></div>
<div class="a" style="left:751.3px;top:36px;width:11px;height:10px;border:1.2px solid #2a2a2a;background:#e0e0e0;box-shadow:0 0 0 0.6px rgba(255,255,255,.7)"><div class="a" style="left:0;top:0;width:8.6px;height:5px;background:#7a7a7a"></div></div>
<div class="a" style="left:770.8px;top:36px;width:11px;height:10px;border:1.2px solid #3a3a3a;background:#f4f4f4;box-shadow:0 0 0 0.6px rgba(255,255,255,.7)"><div class="a" style="left:6px;top:0;width:2.6px;height:7.6px;background:#cfcfcf"></div></div>
<div class="a" style="left:806.5px;top:35.5px;width:11.5px;height:10px;border:1.2px solid #2a2a2a;border-top-width:2.5px;background:#f4f4f4"><div class="a" style="left:2.5px;top:1px;width:4px;height:2.5px;border:0.8px solid #444"></div><div class="a" style="left:2.5px;top:4.8px;width:4px;height:0.9px;background:#444"></div></div>
<div class="a" style="left:0;top:543px;width:860px;height:33px;background:#000"></div>
</body></html>
